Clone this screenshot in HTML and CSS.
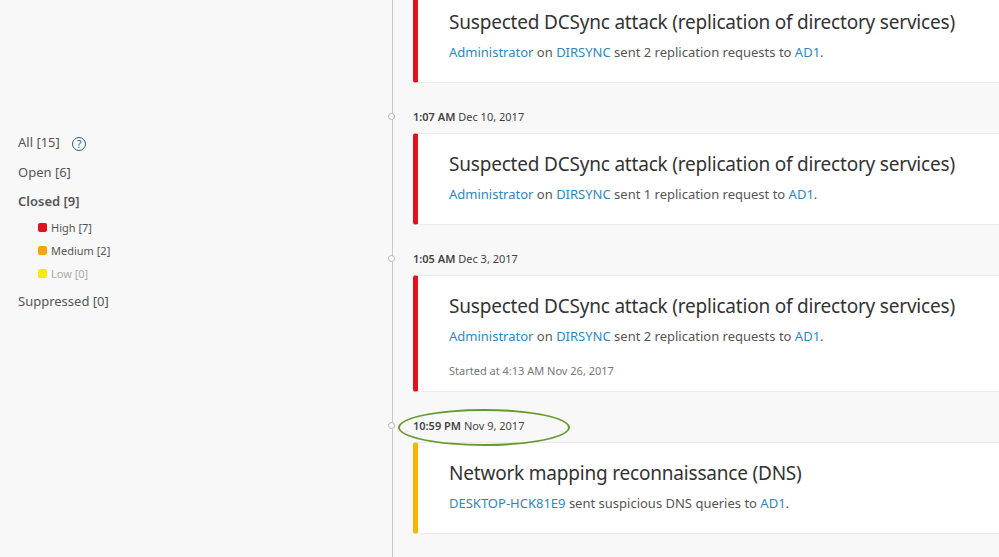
FILE: index.html
```html
<!DOCTYPE html>
<html>
<head>
<meta charset="utf-8">
<link rel="stylesheet" href="styles.css">
</head>
<body>
<div class="page">
  <aside class="sidebar">
    <ul class="filters">
      <li class="filter">All [15] <span class="help">?</span></li>
      <li class="filter">Open [6]</li>
      <li class="filter active">Closed [9]
        <ul class="sev">
          <li class="sev-item"><span class="sq high"></span>High [7]</li>
          <li class="sev-item"><span class="sq med"></span>Medium [2]</li>
          <li class="sev-item dim"><span class="sq low"></span>Low [0]</li>
        </ul>
      </li>
      <li class="filter">Suppressed [0]</li>
    </ul>
  </aside>
  <main class="timeline">
    <div class="card high-b">
      <div class="title">Suspected DCSync attack (replication of directory services)</div>
      <div class="desc"><a>Administrator</a> on <a>DIRSYNC</a> sent 2 replication requests to <a>AD1</a>.</div>
    </div>
    <div class="stamp"><span class="dot"></span><b>1:07 AM</b> Dec 10, 2017</div>
    <div class="card high-b">
      <div class="title">Suspected DCSync attack (replication of directory services)</div>
      <div class="desc"><a>Administrator</a> on <a>DIRSYNC</a> sent 1 replication request to <a>AD1</a>.</div>
    </div>
    <div class="stamp"><span class="dot"></span><b>1:05 AM</b> Dec 3, 2017</div>
    <div class="card high-b">
      <div class="title">Suspected DCSync attack (replication of directory services)</div>
      <div class="desc"><a>Administrator</a> on <a>DIRSYNC</a> sent 2 replication requests to <a>AD1</a>.</div>
      <div class="started">Started at 4:13 AM Nov 26, 2017</div>
    </div>
    <div class="stamp"><span class="dot"></span><b>10:59 PM</b> Nov 9, 2017<span class="ring"></span></div>
    <div class="card med-b">
      <div class="title">Network mapping reconnaissance (DNS)</div>
      <div class="desc"><a>DESKTOP-HCK81E9</a> sent suspicious DNS queries to <a>AD1</a>.</div>
    </div>
  </main>
</div>
</body>
</html>
```
FILE: styles.css
```css
html, body {
  margin: 0;
  padding: 0;
  background: #f8f8f9;
  font-family: "Noto Sans", "Open Sans", sans-serif;
  color: #555;
  overflow: hidden;
}
.page {
  display: flex;
  height: 557px;
  overflow: hidden;
}
.sidebar {
  width: 392px;
  flex: none;
  padding-top: 132px;
}
.filters {
  list-style: none;
  margin: 0;
  padding: 0 0 0 18px;
}
.filter {
  font-size: 13px;
  line-height: 20px;
  margin-bottom: 10px;
  color: #555;
}
.filter.active {
  font-weight: 600;
  margin-top: -1px;
}
.help {
  display: inline-flex;
  align-items: center;
  justify-content: center;
  width: 12px;
  height: 12px;
  border: 1.3px solid #2f5d78;
  border-radius: 50%;
  font-size: 10px;
  line-height: 1;
  color: #2f5d78;
  font-weight: 400;
  margin-left: 9px;
  vertical-align: -1px;
}
.sev {
  list-style: none;
  margin: 9px 0 0 0;
  padding: 0 0 0 20px;
  font-weight: 400;
}
.sev-item {
  font-size: 11px;
  line-height: 15px;
  height: 15px;
  margin-bottom: 8px;
  color: #555;
  display: flex;
  align-items: center;
}
.sev-item:last-child { margin-bottom: 4px; }
.sev-item.dim { color: #aaa; }
.sq {
  width: 9px;
  height: 9px;
  border-radius: 2px;
  margin-right: 4px;
  display: inline-block;
}
.sq.high { background: #e3101f; }
.sq.med { background: #f5a70a; }
.sq.low { background: #f8ea0c; }

.timeline {
  flex: 1;
  border-left: 1px solid #c9c9c9;
  padding-left: 20px;
  margin-top: -9px;
  min-width: 0;
}
.card {
  background: #fff;
  border: 1px solid #eaeaea;
  border-left: 5px solid #e3101f;
  border-radius: 3px 0 0 3px;
  margin-right: -10px;
  padding: 17px 0 21px 31px;
}
.card.med-b { border-left-color: #f7b500; }
.title {
  font-size: 19px;
  line-height: 26px;
  color: #333;
  letter-spacing: -0.2px;
}
.desc {
  font-size: 13px;
  line-height: 18px;
  margin-top: 8px;
  color: #555;
}
.desc a { color: #2b88c5; }
.started {
  font-size: 11px;
  line-height: 16px;
  margin-top: 18px;
  margin-bottom: -9px;
  color: #777;
}
.stamp {
  position: relative;
  font-size: 11px;
  line-height: 16px;
  color: #444;
  padding: 26px 0 8px;
}
.stamp b { font-weight: 600; }
.dot {
  position: absolute;
  left: -25px;
  top: 30px;
  width: 7px;
  height: 7px;
  box-sizing: border-box;
  border: 1px solid #b5b5b5;
  background: #fff;
  border-radius: 50%;
}
.ring {
  position: absolute;
  left: -15px;
  top: 17px;
  width: 168px;
  height: 33px;
  border: 2.5px solid #669a2e;
  border-radius: 50%;
}
```
